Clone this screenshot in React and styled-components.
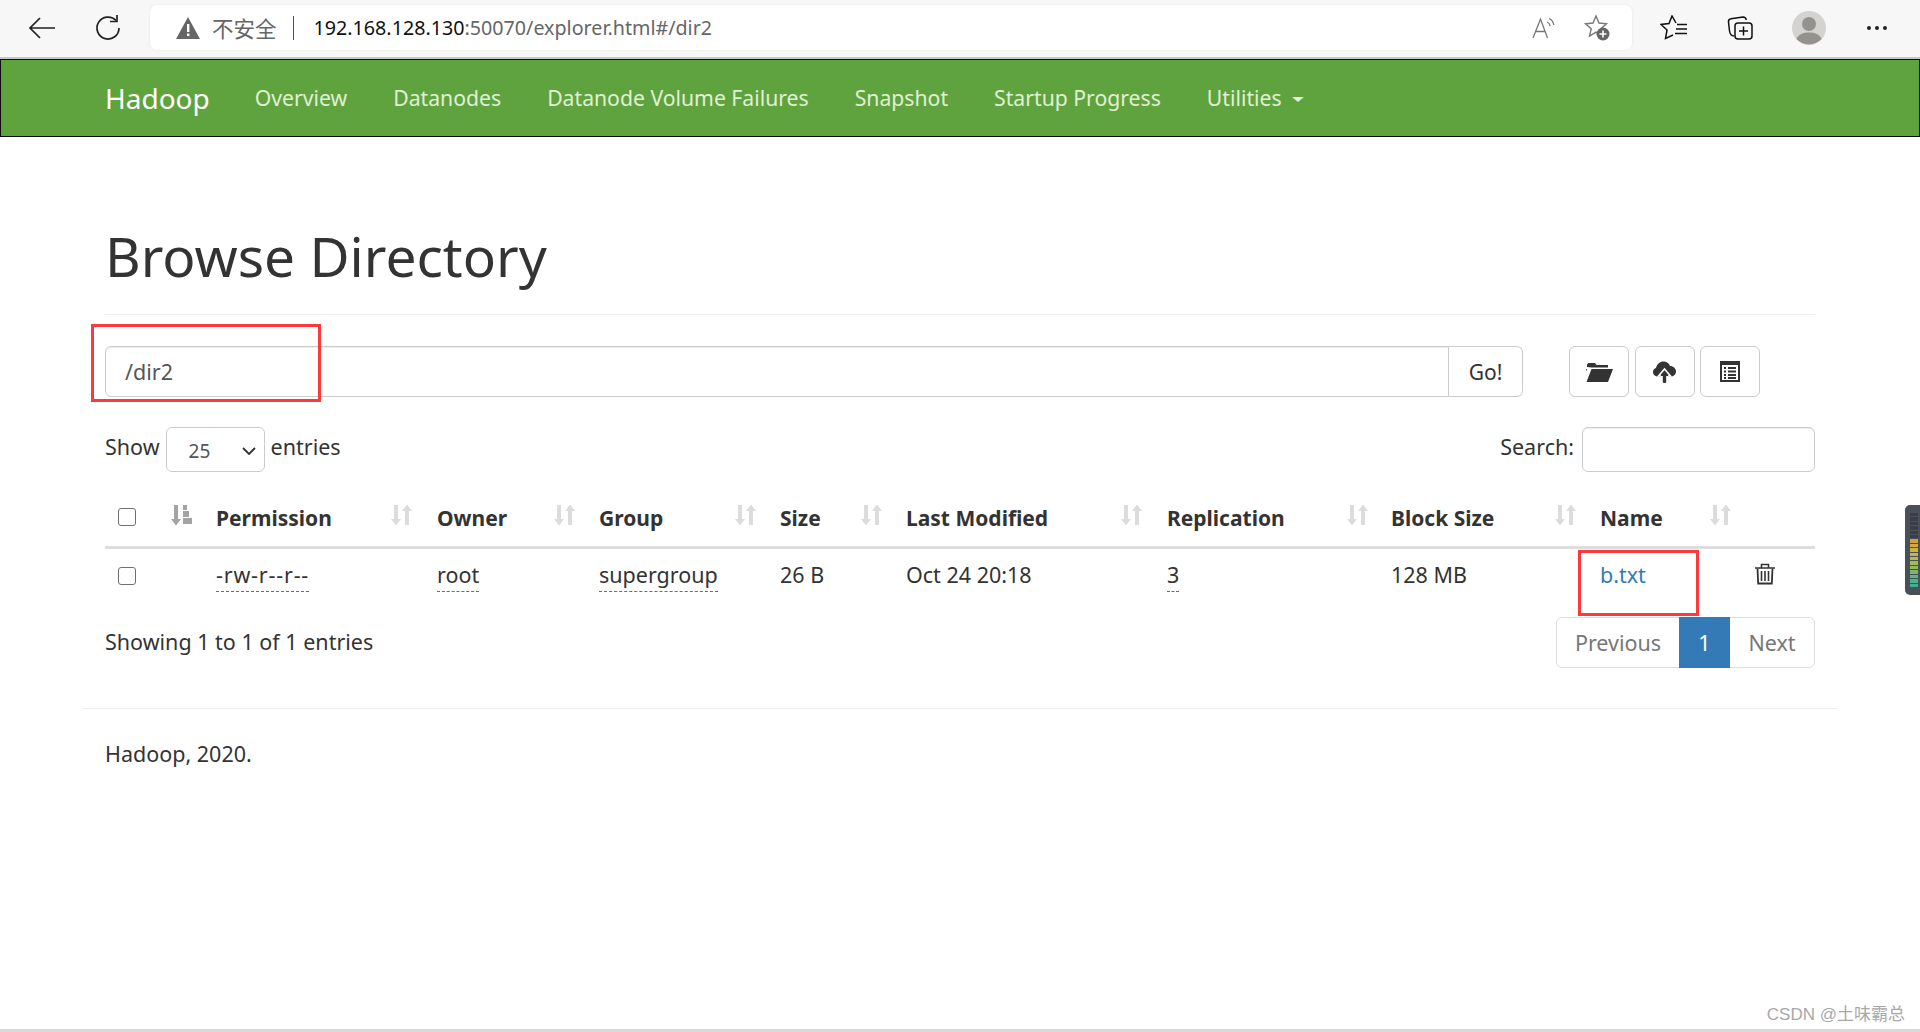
import React from "react";
import styled, { createGlobalStyle } from "styled-components";

const GlobalStyle = createGlobalStyle`
  html, body {
    margin: 0;
    padding: 0;
    background: #fff;
    font-family: "Noto Sans", "Noto Sans CJK SC", sans-serif;
    color: #333;
    overflow: hidden;
  }
  * { box-sizing: border-box; }
`;

const Page = styled.div`
  position: relative;
  width: 1920px;
  height: 1032px;
  overflow: hidden;
  border-bottom: 3px solid #d9d9d9;
`;

/* browser chrome */
const BrowserBar = styled.div`
  height: 59px;
  background: #f7f7f7;
  border-bottom: 2px solid #c8c8c8;
  display: flex;
  align-items: center;
  padding: 0 0 2px 28px;
`;

const ChromeIcon = styled.div`
  width: ${(p) => p.$w || 40}px;
  margin-right: ${(p) => p.$gap || 0}px;
  display: flex;
  align-items: center;
  justify-content: center;
  flex: none;
`;

const AddressBar = styled.div`
  width: 1482px;
  height: 45px;
  margin: 0 28px 0 28px;
  background: #fff;
  border-radius: 7px;
  box-shadow: 0 0 3px rgba(0, 0, 0, 0.08);
  display: flex;
  align-items: center;
  padding-left: 26px;
  font-size: 19.7px;
  flex: none;
`;

const Insecure = styled.span`
  color: #666;
  margin-left: 12px;
  font-family: "Noto Sans CJK SC", sans-serif;
  font-size: 21.5px;
`;

const Divider = styled.span`
  width: 1px;
  height: 24px;
  background: #555;
  margin: 0 20px 0 16px;
`;

const UrlHost = styled.span`
  color: #111;
`;

const UrlRest = styled.span`
  color: #666;
`;

const AddressActions = styled.div`
  margin-left: auto;
  display: flex;
  align-items: center;
`;

/* navbar */
const Navbar = styled.nav`
  height: 78px;
  background: #5fa33e;
  border: 1px solid #0c0c0c;
  display: flex;
  align-items: center;
  padding: 0 0 1px 104px;
`;

const Brand = styled.a`
  color: #fff;
  font-size: 28px;
  margin-right: 45px;
`;

const NavLink = styled.a`
  color: #e0f0d4;
  font-size: 21.2px;
  margin-right: 46px;
  display: flex;
  align-items: center;
`;

const Caret = styled.span`
  width: 0;
  height: 0;
  margin-left: 10px;
  margin-top: 3px;
  border-top: 5px solid #e0f0d4;
  border-left: 6px solid transparent;
  border-right: 6px solid transparent;
`;

/* content */
const Container = styled.main`
  padding: 0 105px;
`;

const Title = styled.h1`
  margin: 0;
  padding-top: 81px;
  height: 178px;
  font-size: 55px;
  line-height: 76px;
  font-weight: 400;
  color: #333;
  border-bottom: 1px solid #eee;
`;

const PathRow = styled.div`
  display: flex;
  margin-top: 31px;
  height: 51px;
`;

const PathGroup = styled.div`
  width: 1418px;
  display: flex;
  margin-right: 46px;
`;

const PathInput = styled.div`
  flex: 1;
  border: 1px solid #ccc;
  border-radius: 6px 0 0 6px;
  box-shadow: inset 0 1px 1px rgba(0, 0, 0, 0.075);
  padding-left: 19px;
  font-size: 21.5px;
  line-height: 49px;
  color: #555;
`;

const GoButton = styled.button`
  width: 74px;
  border: 1px solid #ccc;
  border-left: 0;
  border-radius: 0 6px 6px 0;
  background: #fff;
  font: inherit;
  font-size: 21px;
  color: #333;
  padding: 0;
`;

const IconButton = styled.button`
  width: 60px;
  margin-right: 5.5px;
  border: 1px solid #ccc;
  border-radius: 6px;
  background: #fff;
  padding: 0;
  display: flex;
  align-items: center;
  justify-content: center;
`;

const ControlsRow = styled.div`
  display: flex;
  align-items: flex-start;
  justify-content: space-between;
  margin-top: 30px;
  height: 45px;
  font-size: 21.5px;
`;

const Side = styled.div`
  display: flex;
  align-items: flex-start;
  line-height: 40px;
`;

const EntrySelect = styled.div`
  width: 99px;
  height: 45px;
  margin: 0 6px;
  border: 1px solid #ccc;
  border-radius: 6px;
  display: flex;
  align-items: center;
  justify-content: space-between;
  padding: 2px 8px 0 22px;
  font-size: 19px;
  color: #555;
`;

const SearchInput = styled.div`
  width: 233px;
  height: 45px;
  margin-left: 8px;
  border: 1px solid #ccc;
  border-radius: 6px;
  box-shadow: inset 0 1px 1px rgba(0, 0, 0, 0.075);
`;

const Table = styled.table`
  width: 1710px;
  margin-top: 20px;
  border-collapse: collapse;
  table-layout: fixed;
  font-size: 21.5px;
`;

const Col = styled.col`
  width: ${(p) => p.$w}px;
`;

const Th = styled.th`
  position: relative;
  height: 55px;
  padding: 0 0 2px 21px;
  text-align: left;
  font-size: 21px;
  font-weight: 700;
  color: #333;
  border-bottom: 3px solid #ddd;
`;

const Td = styled.td`
  height: 64px;
  padding: 0 0 11px 21px;
  color: #333;
  font-weight: 400;
`;

const CheckCell = styled.td`
  height: 64px;
  padding: 0 0 8px 13px;
`;

const CheckHead = styled.th`
  position: relative;
  padding: 0 0 3px 13px;
  text-align: left;
  border-bottom: 3px solid #ddd;
`;

const Checkbox = styled.span`
  display: block;
  width: 18px;
  height: 18px;
  border: 1.5px solid #6f6f6f;
  border-radius: 3px;
  background: #fff;
`;

const SortSlot = styled.span`
  position: absolute;
  right: ${(p) => p.$right}px;
  top: 12px;
  display: flex;
`;

const Abbr = styled.span`
  padding-bottom: 2px;
  border-bottom: 1px dashed #337ab7;
  letter-spacing: ${(p) => p.$spacing || 0}px;
`;

const FileLink = styled.a`
  color: #337ab7;
`;

const TrashCell = styled.td`
  height: 64px;
  padding: 0 0 6px 20px;
`;

const FooterRow = styled.div`
  display: flex;
  justify-content: space-between;
  align-items: flex-start;
  font-size: 21.5px;
  margin-top: 6px;
`;

const InfoText = styled.div`
  padding-top: 9px;
  line-height: 32px;
`;

const Pager = styled.div`
  display: flex;
  height: 51px;
  border: 1px solid #ddd;
  border-radius: 6px;
`;

const PageItem = styled.span`
  display: flex;
  align-items: center;
  justify-content: center;
  width: ${(p) => p.$w}px;
  margin: ${(p) => (p.$active ? "-1px 0" : "0")};
  color: ${(p) => (p.$active ? "#fff" : "#777")};
  background: ${(p) => (p.$active ? "#337ab7" : "#fff")};
  border-radius: ${(p) => p.$radius || "0"};
`;

const PageFooter = styled.footer`
  margin: 40px 83px 0;
  padding: 29px 0 0 22px;
  border-top: 1px solid #eee;
  font-size: 21.5px;
  line-height: 32px;
`;

/* things lying over the page */
const RedBox = styled.div`
  position: absolute;
  left: ${(p) => p.$x}px;
  top: ${(p) => p.$y}px;
  width: ${(p) => p.$w}px;
  height: ${(p) => p.$h}px;
  border: 3px solid #fb3a3d;
`;

const Watermark = styled.div`
  position: absolute;
  right: 15px;
  bottom: 4px;
  font-family: "Liberation Sans", "Noto Sans CJK SC", sans-serif;
  font-size: 17px;
  color: #a8a8a8;
`;

const EdgeWidget = styled.div`
  position: absolute;
  right: 0;
  top: 505px;
  width: 15px;
  height: 90px;
  background: #4a505a;
  border-radius: 5px 0 0 5px;
  padding: 8px 2px 8px 5px;
  display: flex;
  flex-direction: column;
  gap: 1px;
`;

const Tick = styled.span`
  flex: 1;
  background: ${(p) => p.$c};
`;

const BackIcon = () => (
  <svg width="28" height="24" viewBox="0 0 28 24" fill="none" stroke="#222" strokeWidth="1.7">
    <path d="M27 12H2M12 2 2 12l10 10" />
  </svg>
);

const ReloadIcon = () => (
  <svg width="28" height="28" viewBox="0 0 28 28" fill="none" stroke="#222" strokeWidth="1.7">
    <path d="M22 6.5A11 11 0 1 0 25 14" />
    <path d="M23 1v6.5h-7" />
  </svg>
);

const WarnIcon = () => (
  <svg width="24" height="22" viewBox="0 0 24 22">
    <path d="M12 0 24 22H0z" fill="#666" />
    <rect x="11" y="7" width="2.4" height="8" fill="#fff" />
    <rect x="11" y="16.5" width="2.4" height="2.6" fill="#fff" />
  </svg>
);

const ReadAloudIcon = () => (
  <svg width="26" height="24" viewBox="0 0 26 24" fill="none" stroke="#777" strokeWidth="1.3">
    <path d="M1 22 8.5 3l7 19M3.800 15.500h9.500" />
    <path d="M15 6c2 .7 2.800 2 3.200 4M17 2.500c2.600 1 4.300 3.300 4.800 6.500" />
  </svg>
);

const StarAddIcon = () => (
  <svg width="28" height="28" viewBox="0 0 28 28">
    <path
      d="M13 2l3 7 7.500.7-5.700 5 1.700 7.300-6.500-3.900-6.500 3.900 1.700-7.300-5.700-5L10 9z"
      fill="none"
      stroke="#777"
      strokeWidth="1.4"
    />
    <circle cx="20" cy="20" r="6.500" fill="#666" />
    <path d="M20 16.500v7M16.500 20h7" stroke="#fff" strokeWidth="1.6" />
  </svg>
);

const FavoritesIcon = () => (
  <svg width="28" height="26" viewBox="0 0 28 26" fill="none" stroke="#111" strokeWidth="1.5">
    <path d="M16 8 12 1 9 8.500 1 9.500l6 5.500-1.500 8.500L13 20" />
    <path d="M17 9.500h10M16 14h11M15 18.500h12" />
  </svg>
);

const CollectionsIcon = () => (
  <svg width="26" height="26" viewBox="0 0 26 26" fill="none" stroke="#111" strokeWidth="1.5">
    <path d="M7 21C4 21 3 19 2.500 16L1.500 7c-.2-2 .8-3 2.500-3.200L16 2c2 0 3 1 3.200 3" />
    <rect x="8" y="8" width="17" height="16" rx="3" />
    <path d="M16.500 11.500v9M12 16h9" />
  </svg>
);

const Avatar = () => (
  <svg width="34" height="34" viewBox="0 0 34 34">
    <circle cx="17" cy="17" r="17" fill="#d4d3cf" />
    <circle cx="17" cy="13" r="7" fill="#94928e" />
    <path d="M4.500 28c2-5 7-6.500 12.500-6.500S27.500 23 29.500 28A17 17 0 0 1 4.500 28z" fill="#94928e" />
  </svg>
);

const MoreIcon = () => (
  <svg width="22" height="6" viewBox="0 0 22 6" fill="#222">
    <circle cx="3" cy="3" r="2" />
    <circle cx="11" cy="3" r="2" />
    <circle cx="19" cy="3" r="2" />
  </svg>
);

const FolderIcon = () => (
  <svg width="27" height="20" viewBox="0 0 27 20" fill="#333">
    <path d="M1 5V2.500L2.500 1H9l1.500 2H22v2.500H5.500z" />
    <path d="M1 7v2.500L0 7zM5.500 7H27l-5 13H0.500z" />
  </svg>
);

const UploadIcon = () => (
  <svg width="23" height="22" viewBox="0 0 23 22">
    <path
      fill="#333"
      d="M5.500 15.500C2 15.500 0 13.500 0 11c0-2 1.300-3.500 3-4C4 3 7 .5 10.500 .5c3 0 5.500 1.500 6.500 4.500 3.500 0 6 2.500 6 5.500 0 2.500-2 5-5 5z"
    />
    <path fill="#333" stroke="#fff" strokeWidth="1.6" d="M11.500 8 17.500 15h-3.500v7h-5v-7H5.500z" />
    <path fill="#333" d="M11.500 10 15.500 15h-2.700v7h-2.600v-7H7.500z" />
  </svg>
);

const ListIcon = () => (
  <svg width="20" height="21" viewBox="0 0 20 21">
    <path fillRule="evenodd" fill="#333" d="M0 0h20v21H0zM2 4v15h16V4z" />
    <path stroke="#333" strokeWidth="1.8" d="M4 7h2M8 7h8M4 10.500h2M8 10.500h8M4 14h2M8 14h8M4 17h2M8 17h8" />
  </svg>
);

const SortIcon = ({ active }) => (
  <svg width="21" height="22" viewBox="0 0 21 22" fill={active ? "#a3a3a3" : "#dcdcdc"}>
    <path d="M3 1h4v14h3l-5 6.500L0 15h3z" />
    {active ? (
      <path d="M12 1h4v5h-4zM12 7h6v6h-6zM12 14h9v6h-9z" />
    ) : (
      <path d="M14 21h4V7h3L16 .5 11 7h3z" />
    )}
  </svg>
);

const TrashIcon = () => (
  <svg width="20" height="22" viewBox="0 0 20 22" fill="none" stroke="#333" strokeWidth="1.6">
    <path d="M0 5h20M6.500 4.500V1.500h7v3" />
    <path d="M2.500 5.500l.7 15h13.600l.7-15" strokeWidth="1.8" />
    <path d="M6.500 8v10M10 8v10M13.500 8v10" strokeWidth="1.6" />
  </svg>
);

const headers = [
  { label: "Permission", right: 4 },
  { label: "Owner", right: 3 },
  { label: "Group", right: 3 },
  { label: "Size", right: 3 },
  { label: "Last Modified", right: 4 },
  { label: "Replication", right: 2 },
  { label: "Block Size", right: 3 },
  { label: "Name", right: 4 },
];

const widths = [90, 221, 162, 181, 126, 261, 224, 209, 156, 80];

const tickColors = [
  "#3a3e46", "#3a3e46", "#3a3e46", "#3a3e46", "#3a3e46", "#3a3e46",
  "#d79f3c", "#d7aa3c", "#cdb23c", "#c4b83f", "#b5bb48", "#a5bb50",
  "#8fba5e", "#79b86a", "#62b57a", "#4cb28a", "#3fb095",
];

export default function App() {
  return (
    <Page>
      <GlobalStyle />
      <BrowserBar>
        <ChromeIcon $w={28} $gap={38}>
          <BackIcon />
        </ChromeIcon>
        <ChromeIcon $w={28}>
          <ReloadIcon />
        </ChromeIcon>
        <AddressBar>
          <WarnIcon />
          <Insecure>不安全</Insecure>
          <Divider />
          <UrlHost>192.168.128.130</UrlHost>
          <UrlRest>:50070/explorer.html#/dir2</UrlRest>
          <AddressActions>
            <ChromeIcon $w={26} $gap={25}>
              <ReadAloudIcon />
            </ChromeIcon>
            <ChromeIcon $w={28} $gap={21}>
              <StarAddIcon />
            </ChromeIcon>
          </AddressActions>
        </AddressBar>
        <ChromeIcon $w={28} $gap={39}>
          <FavoritesIcon />
        </ChromeIcon>
        <ChromeIcon $w={26} $gap={39}>
          <CollectionsIcon />
        </ChromeIcon>
        <ChromeIcon $w={34} $gap={40}>
          <Avatar />
        </ChromeIcon>
        <ChromeIcon $w={22}>
          <MoreIcon />
        </ChromeIcon>
      </BrowserBar>

      <Navbar>
        <Brand>Hadoop</Brand>
        <NavLink>Overview</NavLink>
        <NavLink>Datanodes</NavLink>
        <NavLink>Datanode Volume Failures</NavLink>
        <NavLink>Snapshot</NavLink>
        <NavLink>Startup Progress</NavLink>
        <NavLink>
          Utilities
          <Caret />
        </NavLink>
      </Navbar>

      <Container>
        <Title>Browse Directory</Title>

        <PathRow>
          <PathGroup>
            <PathInput>/dir2</PathInput>
            <GoButton>Go!</GoButton>
          </PathGroup>
          <IconButton>
            <FolderIcon />
          </IconButton>
          <IconButton>
            <UploadIcon />
          </IconButton>
          <IconButton>
            <ListIcon />
          </IconButton>
        </PathRow>

        <ControlsRow>
          <Side>
            Show
            <EntrySelect>
              25
              <svg width="14" height="8" viewBox="0 0 14 8" fill="none" stroke="#333" strokeWidth="1.8">
                <path d="M1 1l6 6 6-6" />
              </svg>
            </EntrySelect>
            entries
          </Side>
          <Side>
            Search:
            <SearchInput />
          </Side>
        </ControlsRow>

        <Table>
          <colgroup>
            {widths.map((w, i) => (
              <Col key={i} $w={w} />
            ))}
          </colgroup>
          <thead>
            <tr>
              <CheckHead>
                <Checkbox />
                <SortSlot $right={3}>
                  <SortIcon active />
                </SortSlot>
              </CheckHead>
              {headers.map((h) => (
                <Th key={h.label}>
                  {h.label}
                  <SortSlot $right={h.right}>
                    <SortIcon />
                  </SortSlot>
                </Th>
              ))}
              <Th />
            </tr>
          </thead>
          <tbody>
            <tr>
              <CheckCell>
                <Checkbox />
              </CheckCell>
              <Td>
                <Abbr $spacing={0.8}>-rw-r--r--</Abbr>
              </Td>
              <Td>
                <Abbr>root</Abbr>
              </Td>
              <Td>
                <Abbr>supergroup</Abbr>
              </Td>
              <Td>26 B</Td>
              <Td>Oct 24 20:18</Td>
              <Td>
                <Abbr>3</Abbr>
              </Td>
              <Td>128 MB</Td>
              <Td>
                <FileLink>b.txt</FileLink>
              </Td>
              <TrashCell>
                <TrashIcon />
              </TrashCell>
            </tr>
          </tbody>
        </Table>

        <FooterRow>
          <InfoText>Showing 1 to 1 of 1 entries</InfoText>
          <Pager>
            <PageItem $w={122} $radius="6px 0 0 6px">Previous</PageItem>
            <PageItem $w={51} $active>1</PageItem>
            <PageItem $w={84} $radius="0 6px 6px 0">Next</PageItem>
          </Pager>
        </FooterRow>
      </Container>

      <PageFooter>Hadoop, 2020.</PageFooter>

      <RedBox $x={91} $y={324} $w={230} $h={78} />
      <RedBox $x={1578} $y={550} $w={121} $h={66} />
      <Watermark>CSDN @土味霸总</Watermark>
      <EdgeWidget>
        {tickColors.map((c, i) => (
          <Tick key={i} $c={c} />
        ))}
      </EdgeWidget>
    </Page>
  );
}
